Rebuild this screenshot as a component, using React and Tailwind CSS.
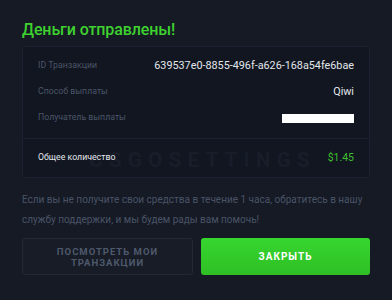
export default function App() {
  const rows = [
    { label: 'ID Транзакции', value: '639537e0-8855-496f-a626-168a54fe6bae' },
    { label: 'Способ выплаты', value: 'Qiwi' },
  ];

  return (
    <div
      className="w-[392px] h-[300px] bg-[#151a25] px-[22px] pt-[19px] overflow-hidden"
      style={{ fontFamily: 'Roboto, "Noto Sans", sans-serif' }}
    >
      {/* Title */}
      <h1 className="text-[16px] leading-[22px] font-medium tracking-[-0.1px] text-[#3fd12f]">
        Деньги отправлены!
      </h1>

      {/* Details card */}
      <div className="mt-[5px] rounded-[3px] border border-[#1b2130] bg-[#111620]">
        <div className="px-[15px] pt-[6px] pb-[7px]">
          {rows.map((row) => (
            <div key={row.label} className="flex items-center justify-between h-[26px]">
              <span className="text-[8.75px] text-[#4c5567]">{row.label}</span>
              <span className="text-[10.8px] text-[#e3e6ec]">{row.value}</span>
            </div>
          ))}
          <div className="flex items-center justify-between h-[26px]">
            <span className="text-[8.75px] text-[#4c5567]">Получатель выплаты</span>
            <span className="block w-[72px] h-[9px] bg-white" />
          </div>
        </div>

        <div className="relative flex items-center justify-between h-[39px] px-[15px] border-t border-[#1b2130]">
          {/* Watermark */}
          <span className="absolute left-[66px] top-[6px] text-[21px] font-bold tracking-[6px] text-[#181d29] select-none">
            CSGOSETTINGS
          </span>
          <span className="relative text-[8.75px] text-[#e3e6ec]">Общее количество</span>
          <span className="relative text-[10.5px] text-[#3fbf2f]">$1.45</span>
        </div>
      </div>

      {/* Note */}
      <p className="mt-[12px] text-[10px] leading-[20px] text-[#4a5366]">
        Если вы не получите свои средства в течение 1 часа, обратитесь в нашу службу поддержки, и мы будем рады вам помочь!
      </p>

      {/* Buttons */}
      <div className="mt-[8px] flex gap-[8px]">
        <button className="flex-1 h-[37px] rounded-[3px] border border-[#222836] bg-[#171c27] text-[9.5px] leading-[11px] font-bold tracking-[1px] uppercase text-[#4f596c]">
          Посмотреть мои
          <br />
          транзакции
        </button>
        <button className="flex-1 h-[37px] rounded-[3px] bg-gradient-to-b from-[#37d62f] to-[#2fbf25] text-[10px] font-bold tracking-[1px] uppercase text-white">
          Закрыть
        </button>
      </div>
    </div>
  );
}
